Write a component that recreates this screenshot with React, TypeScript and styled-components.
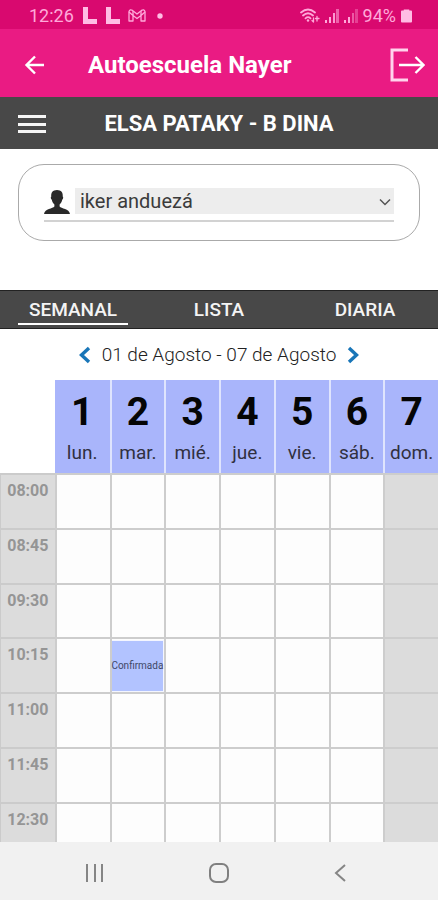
import React, { useState } from "react";
import styled, { createGlobalStyle } from "styled-components";

const GlobalStyle = createGlobalStyle`
  * { box-sizing: border-box; }
  body { margin: 0; background: #fff; font-family: Roboto, "Liberation Sans", sans-serif; color: #222; }
  button, select { font: inherit; color: inherit; border: 0; padding: 0; background: none; }
  button { cursor: pointer; }
  svg { display: block; }
`;

const Screen = styled.div`
  display: flex;
  flex-direction: column;
  height: 100vh;
  overflow: hidden;
`;

const StatusBar = styled.div`
  flex: none;
  display: flex;
  align-items: center;
  justify-content: space-between;
  height: 29px;
  padding: 2px 26px 0 29px;
  background: #d9096f;
  color: #ffa9da;
  font-size: 18px;
`;

const StatusGroup = styled.div<{ $gap: number }>`
  display: flex;
  align-items: center;
  gap: ${(p) => p.$gap}px;
`;

const AppBar = styled.header`
  flex: none;
  display: flex;
  align-items: center;
  height: 68px;
  padding: 4px 13px 0 24px;
  background: #ea1b83;
  color: #fff;
`;

const AppTitle = styled.h1`
  flex: 1;
  margin: 0;
  padding-left: 42px;
  font-size: 24px;
  line-height: 32px;
  font-weight: 700;
`;

const CourseBar = styled.div`
  flex: none;
  display: grid;
  grid-template-columns: 28px 1fr 28px;
  align-items: center;
  height: 52px;
  padding: 2px 18px 0;
  background: #484848;
  color: #fff;
`;

const CourseTitle = styled.h2`
  margin: 0;
  text-align: center;
  font-size: 22px;
  line-height: 28px;
  font-weight: 700;
`;

const TeacherCard = styled.section`
  flex: none;
  margin: 15px 18px 49px;
  padding: 23px 25px 18px;
  border: 1px solid #aaa;
  border-radius: 26px;
`;

const TeacherField = styled.label`
  display: flex;
  align-items: center;
  gap: 5px;
  padding-bottom: 6px;
  border-bottom: 2px solid #d2d2d2;
`;

const SelectWrap = styled.span`
  position: relative;
  flex: 1;
  display: flex;
`;

const TeacherSelect = styled.select`
  flex: 1;
  height: 26px;
  padding: 0 24px 0 5px;
  appearance: none;
  background: #ededed;
  color: #3b3b3b;
  font-size: 20px;
  line-height: 26px;
`;

const SelectArrow = styled.svg`
  position: absolute;
  top: 10px;
  right: 3px;
  pointer-events: none;
`;

const Tabs = styled.nav`
  flex: none;
  display: grid;
  grid-template-columns: repeat(3, 1fr);
  justify-items: center;
  height: 39px;
  background: #484848;
  border-top: 1px solid #222;
  border-bottom: 1px solid #222;
  color: #f4f4f4;
`;

const Tab = styled.button<{ $active: boolean }>`
  width: 110px;
  height: 34px;
  padding-top: 5px;
  border-bottom: 2px solid ${(p) => (p.$active ? "#fff" : "transparent")};
  font-size: 19px;
  line-height: 26px;
  font-weight: 500;
`;

const WeekBar = styled.div`
  flex: none;
  display: flex;
  align-items: center;
  justify-content: center;
  gap: 11px;
  height: 51px;
  color: #222;
  font-size: 19px;
  font-weight: 300;
`;

const Schedule = styled.div`
  flex: 1;
  min-height: 0;
  overflow: hidden;
`;

const Table = styled.table`
  width: 100%;
  table-layout: fixed;
  border-collapse: separate;
  border-spacing: 0;
`;

const DayHead = styled.th<{ $first: boolean }>`
  height: 93px;
  padding: 0;
  vertical-align: top;
  background: #a9b5fb;
  border-left: ${(p) => (p.$first ? 0 : 2)}px solid #dfe4fd;
  font-weight: 400;
`;

const DayNumber = styled.strong`
  display: block;
  padding-top: 9px;
  color: #050505;
  font-size: 39px;
  line-height: 46px;
  font-weight: 700;
`;

const DayName = styled.span`
  display: block;
  padding-top: 5px;
  color: #303040;
  font-size: 19px;
  line-height: 26px;
`;

const HourHead = styled.th`
  height: 12.5vw;
  padding: 7px 0 0;
  vertical-align: top;
  background: #dcdcdc;
  border-top: 2px solid #cbcbcb;
  border-left: 1px solid #cbcbcb;
  color: #959595;
  font-size: 16px;
  line-height: 18px;
  font-weight: 700;
`;

const Slot = styled.td<{ $closed: boolean }>`
  height: 12.5vw;
  padding: 0;
  background: ${(p) => (p.$closed ? "#dcdcdc" : "#fdfdfd")};
  border-top: 2px solid #cdcdcd;
  border-left: 2px solid #cdcdcd;
`;

const Booking = styled.button`
  display: flex;
  align-items: center;
  justify-content: center;
  width: 100%;
  height: 52px;
  background: #b2c3ff;
  border: 1px solid #f4f6ff;
  border-left: 0;
  color: #3f4867;
  font-size: 10px;
  line-height: 14px;
`;

const SystemNav = styled.nav`
  flex: none;
  display: flex;
  align-items: center;
  justify-content: space-between;
  height: 58px;
  padding: 3px 21% 0 19%;
  background: #f1f1f1;
`;

const days = ["lun.", "mar.", "mié.", "jue.", "vie.", "sáb.", "dom."];
const hours = ["08:00", "08:45", "09:30", "10:15", "11:00", "11:45", "12:30"];
const tabs = ["SEMANAL", "LISTA", "DIARIA"];

const LetterBadge = () => (
  <svg width="15" height="17" viewBox="0 0 15 17" fill="#ffbce4">
    <path d="M1 0h5v12h9v5H1z" />
  </svg>
);

const MailMark = () => (
  <svg width="18" height="13" viewBox="0 0 18 13" fill="none" stroke="currentColor" strokeWidth="1.3" strokeLinejoin="round">
    <path d="M1 2.5Q2 0 4.5 1.4L9 5l4.500-3.600Q16 0 17 2.500V12h-4V6.500L9 9.500 5 6.500V12H1z" />
    <path d="M1 3l4 3.500M17 3l-4 3.500M5 2v4.500M13 2v4.500" />
  </svg>
);

const Wifi = () => (
  <svg width="20" height="16" viewBox="0 0 20 16" fill="none" stroke="currentColor" strokeWidth="1.8" strokeLinecap="round">
    <path d="M1 4.500Q8 -1.500 15 4.500M3 7.500q5-4.500 10 0M5.500 10.300q2.500-2.300 5 0" />
    <circle cx="8" cy="12.500" r="1.200" fill="currentColor" stroke="none" />
    <path d="M13.500 10v4m-1.500-1.500 1.500 1.500M17 13V8.500M15.500 10.500h3.500" strokeWidth="1.300" />
  </svg>
);

const Signal = ({ weak = false }: { weak?: boolean }) => (
  <svg width="14" height="14" viewBox="0 0 14 14" fill="currentColor">
    <path d="M0 11h2v3H0zM4 8h2v6H4z" />
    <path d="M8 4h2v10H8z" opacity={weak ? 0.5 : 0.9} />
    <path d="M11 0h3v14h-3z" opacity={weak ? 0.35 : 0.55} />
  </svg>
);

const Chevron = ({ right = false }: { right?: boolean }) => (
  <svg width="12" height="18" viewBox="0 0 12 18" fill="none" stroke="#1976b8" strokeWidth="3.400">
    <path d={right ? "M2 2l7.500 7L2 16" : "M10 2L2.500 9l7.500 7"} />
  </svg>
);

export default function App() {
  const [active, setActive] = useState("SEMANAL");
  return (
    <Screen>
      <GlobalStyle />
      <StatusBar>
        <StatusGroup $gap={8}>
          <span>12:26</span>
          <LetterBadge />
          <LetterBadge />
          <MailMark />
          <svg width="12" height="6" viewBox="0 0 12 6" fill="#ffbce4"><circle cx="6" cy="3" r="2.700" /></svg>
        </StatusGroup>
        <StatusGroup $gap={5}>
          <Wifi />
          <Signal />
          <Signal weak />
          <span>94%</span>
          <svg width="11" height="14" viewBox="0 0 12 14" fill="#ffbce4"><path d="M3 0h6v1h2q1 0 1 1v11q0 1-1 1H1q-1 0-1-1V2q0-1 1-1h2z" /></svg>
        </StatusGroup>
      </StatusBar>
      <AppBar>
        <button aria-label="Volver">
          <svg width="22" height="22" viewBox="0 0 22 22" fill="none" stroke="#fff" strokeWidth="2.400">
            <path d="M20 11H3M11 2.500L2.500 11l8.500 8.500" />
          </svg>
        </button>
        <AppTitle>Autoescuela Nayer</AppTitle>
        <button aria-label="Salir">
          <svg width="36" height="34" viewBox="0 0 36 34" fill="none" stroke="#fff">
            <path d="M19 2H3v30h16" strokeWidth="3" stroke="#ffd3ec" />
            <path d="M10 17h24M26.500 9l8 8-8 8" strokeWidth="2.400" />
          </svg>
        </button>
      </AppBar>
      <CourseBar>
        <button aria-label="Menú">
          <svg width="28" height="20" viewBox="0 0 28 20" fill="#f5f5f5">
            <path d="M0 1h28v3H0zM0 9h28v3H0zM0 16h28v3H0z" />
          </svg>
        </button>
        <CourseTitle>ELSA PATAKY - B DINA</CourseTitle>
      </CourseBar>
      <TeacherCard>
        <TeacherField>
          <svg width="26" height="26" viewBox="0 0 26 26" fill="#292929">
            <path d="M13 2c-4.200 0-6.200 2.800-5.700 6.500-.8.300-.6 2.500.5 3.200.4 2.200 1.300 3.500 2.600 4.700v2c-1.500 2.300-9.600 1.800-10.400 7.600h26c-.8-5.800-8.900-5.300-10.400-7.600v-2c1.300-1.200 2.200-2.500 2.600-4.700 1.100-.7 1.300-2.900.5-3.200.5-3.700-1.500-6.500-5.700-6.500z" />
          </svg>
          <SelectWrap>
            <TeacherSelect aria-label="Profesor">
              <option>iker anduezá</option>
            </TeacherSelect>
            <SelectArrow width="12" height="8" viewBox="0 0 12 8" fill="none" stroke="#555" strokeWidth="1.500">
              <path d="M1 1.500l5 5 5-5" />
            </SelectArrow>
          </SelectWrap>
        </TeacherField>
      </TeacherCard>
      <Tabs>
        {tabs.map((t) => (
          <Tab key={t} $active={t === active} onClick={() => setActive(t)}>{t}</Tab>
        ))}
      </Tabs>
      <WeekBar>
        <button aria-label="Semana anterior"><Chevron /></button>
        <span>01 de Agosto - 07 de Agosto</span>
        <button aria-label="Semana siguiente"><Chevron right /></button>
      </WeekBar>
      <Schedule>
        <Table>
          <thead>
            <tr>
              <td />
              {days.map((d, i) => (
                <DayHead key={d} scope="col" $first={i === 0}>
                  <DayNumber>{i + 1}</DayNumber>
                  <DayName>{d}</DayName>
                </DayHead>
              ))}
            </tr>
          </thead>
          <tbody>
            {hours.map((h) => (
              <tr key={h}>
                <HourHead scope="row">{h}</HourHead>
                {days.map((d) => (
                  <Slot key={d} $closed={d === "dom."}>
                    {h === "10:15" && d === "mar." && <Booking>Confirmada</Booking>}
                  </Slot>
                ))}
              </tr>
            ))}
          </tbody>
        </Table>
      </Schedule>
      <SystemNav>
        <button aria-label="Recientes">
          <svg width="20" height="18" viewBox="0 0 20 18" stroke="#858585" strokeWidth="2"><path d="M4 0v18M12 0v18M19 0v18" /></svg>
        </button>
        <button aria-label="Inicio">
          <svg width="20" height="20" viewBox="0 0 20 20" fill="none" stroke="#808080" strokeWidth="2"><rect x="1" y="1" width="18" height="18" rx="6" /></svg>
        </button>
        <button aria-label="Atrás">
          <svg width="12" height="18" viewBox="0 0 12 18" fill="none" stroke="#858585" strokeWidth="2"><path d="M11 1L2 9l9 8" /></svg>
        </button>
      </SystemNav>
    </Screen>
  );
}
